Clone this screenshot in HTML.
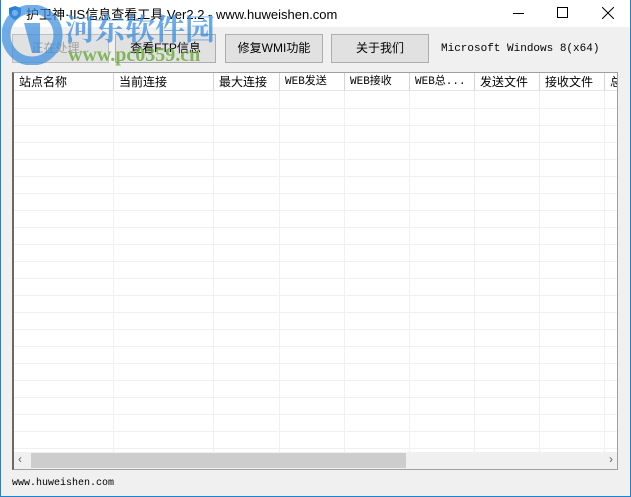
<!DOCTYPE html>
<html><head><meta charset="utf-8"><style>
*{margin:0;padding:0;box-sizing:border-box}
body{width:631px;height:497px;background:#f0f0f0;position:relative;overflow:hidden;font-family:"Liberation Sans","Noto Sans CJK SC",sans-serif;font-size:12px;color:#000}
.frame{position:absolute;inset:0;border:1px solid #1883d7;border-top:none}
.title{position:absolute;left:1px;top:0;width:629px;height:27px;background:#fff}
.title .t{position:absolute;left:25px;top:4px;font-size:13px}
.btn{position:absolute;top:34px;height:29px;background:#e1e1e1;border:1px solid #adadad;text-align:center;line-height:26px;font-size:12px}
.lv{position:absolute;left:12px;top:72px;width:606px;height:398px;background:#fff;border:1px solid #a0a0a0;border-left:2px solid #696969;overflow:hidden}
.hdr{position:absolute;top:0;height:18px;border-right:1px solid #d5d5d5;border-bottom:1px solid #e5e5e5;font-size:12px;line-height:18px;padding-left:5px;white-space:nowrap;overflow:hidden}
.vl{position:absolute;top:18px;bottom:0;width:1px;background:#f0f0f0}
.hl{position:absolute;left:0;right:0;height:1px;background:#f0f0f0}
.sb{position:absolute;left:0;right:0;bottom:0;height:17px;background:#f0f0f0}
.mono{font-family:"Liberation Mono","Noto Sans CJK SC",monospace;font-size:11px}
</style></head><body>
<div class="title">
<svg style="position:absolute;left:6px;top:5px" width="16" height="16" viewBox="0 0 16 16"><path d="M8 1L14 3V8C14 12 8 15 8 15S2 12 2 8V3Z" fill="#2a7fd4"/><circle cx="8" cy="8" r="3" fill="#fff"/></svg>
<span class="t">护卫神·IIS信息查看工具 Ver2.2 - www.huweishen.com</span>
<div style="position:absolute;left:512px;top:13px;width:11px;height:1px;background:#000"></div>
<div style="position:absolute;left:556px;top:7px;width:11px;height:11px;border:1px solid #000"></div>
<svg style="position:absolute;left:601px;top:7px" width="12" height="12"><path d="M0 0L12 12M12 0L0 12" stroke="#000"/></svg>
</div>
<div class="btn" style="left:12px;width:97px;color:#a0a0a0;border-color:#bfbfbf">正在处理...</div>
<div class="btn" style="left:115px;width:101px">查看FTP信息</div>
<div class="btn" style="left:225px;width:98px">修复WMI功能</div>
<div class="btn" style="left:331px;width:98px">关于我们</div>
<div class="mono" style="position:absolute;left:441px;top:43px">Microsoft Windows 8(x64)</div>
<div class="lv">
<div class="hdr" style="left:0;width:100px">站点名称</div>
<div class="hdr" style="left:100px;width:100px">当前连接</div>
<div class="hdr" style="left:200px;width:66px">最大连接</div>
<div class="hdr mono" style="left:266px;width:65px">WEB发送</div>
<div class="hdr mono" style="left:331px;width:65px">WEB接收</div>
<div class="hdr mono" style="left:396px;width:65px">WEB总...</div>
<div class="hdr" style="left:461px;width:65px">发送文件</div>
<div class="hdr" style="left:526px;width:65px">接收文件</div>
<div class="hdr" style="left:591px;width:30px">总</div>
<div class="vl" style="left:99px"></div><div class="vl" style="left:199px"></div><div class="vl" style="left:265px"></div><div class="vl" style="left:330px"></div><div class="vl" style="left:395px"></div><div class="vl" style="left:460px"></div><div class="vl" style="left:525px"></div><div class="vl" style="left:590px"></div>
<div id="rows"></div>
<div class="sb"><span style="position:absolute;left:4px;top:0;color:#606060;font-size:12px">‹</span><div style="position:absolute;left:17px;top:1px;width:375px;height:15px;background:#cdcdcd"></div><span style="position:absolute;right:4px;top:0;color:#606060;font-size:12px">›</span></div>
</div>
<div class="mono" style="position:absolute;left:12px;top:478px;font-size:10px">www.huweishen.com</div>
<div style="position:absolute;left:65px;top:5px;font-size:30px;font-weight:bold;color:#3a8de0;opacity:.75;font-family:'Noto Serif CJK SC',serif">河东软件园</div>
<div style="position:absolute;left:68px;top:44px;font-size:20px;font-weight:bold;color:#6aab3a;opacity:.8;font-family:'Liberation Serif',serif">www.pc0359.cn</div>
<svg style="position:absolute;left:2px;top:5px;opacity:.7" width="62" height="60"><circle cx="30" cy="30" r="26" fill="none" stroke="#3a8de0" stroke-width="9"/><path d="M22 18h16v30h-8z" fill="#3a8de0"/></svg>
<div class="frame"></div>
<script>
var r=document.getElementById('rows'),h='';for(var y=35;y<380;y+=17)h+='<div class="hl" style="top:'+y+'px"></div>';r.innerHTML=h;
</script>
</body></html>
